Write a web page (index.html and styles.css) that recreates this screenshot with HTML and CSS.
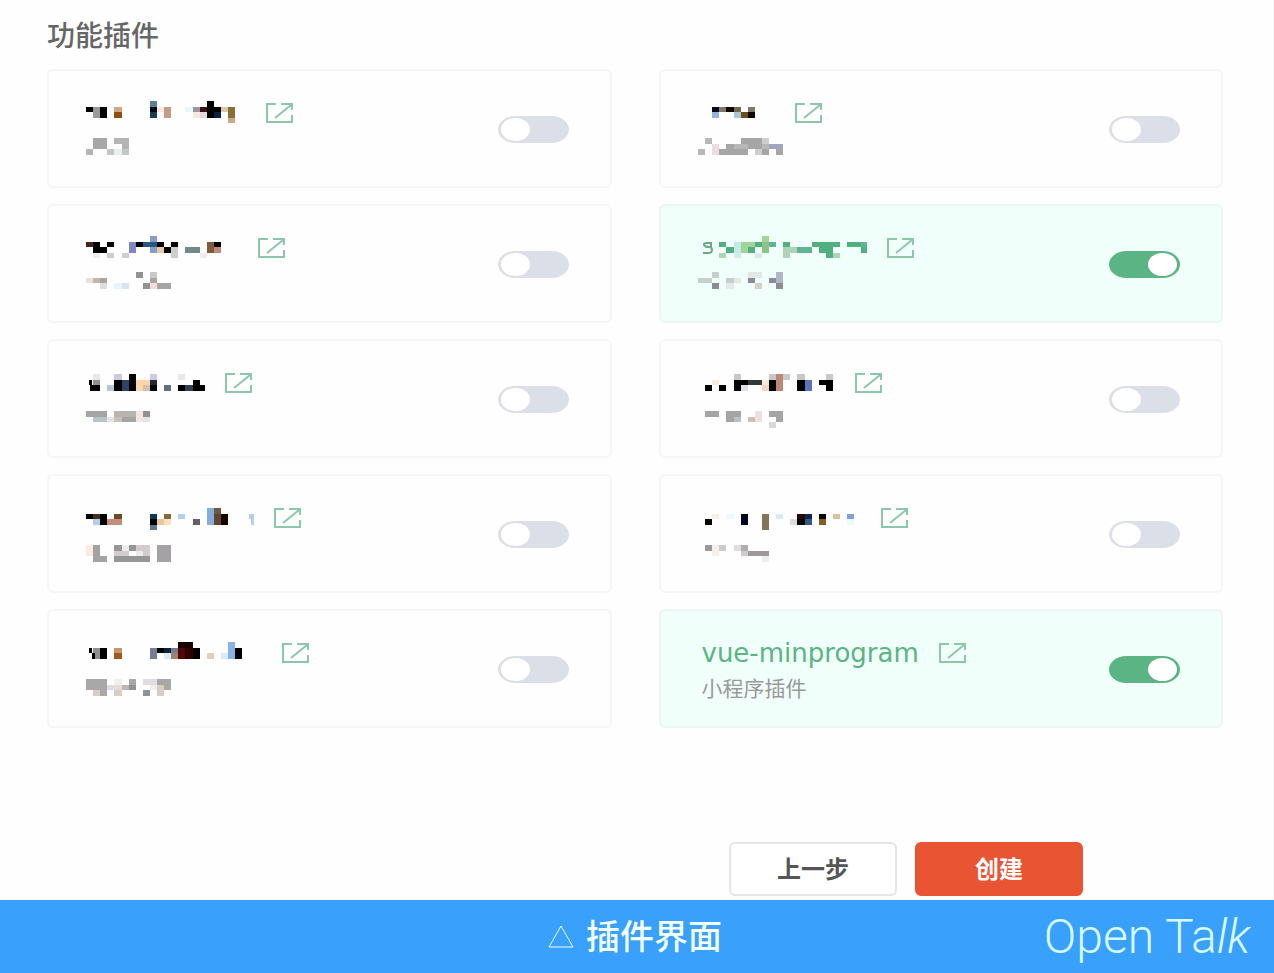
FILE: index.html
```html
<!DOCTYPE html>
<html lang="zh-CN">
<head>
    <meta charset="UTF-8">
    <meta name="viewport" content="width=device-width, initial-scale=1.0">
    <title>功能插件</title>
    <link rel="stylesheet" href="styles.css">
</head>
<body>
    <!-- Shared external link icon -->
    <svg class="sprite" aria-hidden="true">
        <symbol id="icon-link" viewBox="0 0 27 21">
            <path d="M10 1H1v18h25v-7M9 15L25 2M15 1h11v6" />
        </symbol>
    </svg>

    <main class="page">
        <h1 class="page-title">功能插件</h1>

        <div class="plugin-grid">
            <div class="plugin-card">
                <div class="plugin-info">
                    <div class="plugin-head">
                        <svg class="mosaic" width="160" height="28"><g transform="translate(0 5) scale(7.1 5.4)">
                            <path stroke="#000" d="M0 1h1M2 1h1M2 2h1M17 0h1M17 1h2M17 2h1" />
                            <path stroke="#9a98a0" d="M1 1h1M1 2h1M15 1h1" />
                            <path stroke="#d0a884" d="M4 1h1M20 3h1" />
                            <path stroke="#8a5010" d="M4 2h1" />
                            <path stroke="#5b8292" d="M9 0h1" />
                            <path stroke="#000818" d="M9 1h1" />
                            <path stroke="#1a3a50" d="M9 2h1" />
                            <path stroke="#f8e8e0" d="M10 1h1M15 2h1" />
                            <path stroke="#c89a88" d="M11 1h1M11 2h1" />
                            <path stroke="#e8f8f8" d="M14 1h1" />
                            <path stroke="#401018" d="M16 1h1" />
                            <path stroke="#e0d8d8" d="M16 2h1" />
                            <path stroke="#0a2040" d="M18 2h1" />
                            <path stroke="#d8c8b0" d="M19 1h1" />
                            <path stroke="#8a7038" d="M20 1h1M20 2h1" />
                        </g></svg>
                        <a class="plugin-link" href="#" aria-label="查看插件"><svg><use href="#icon-link" /></svg></a>
                    </div>
                    <svg class="mosaic" width="92" height="24"><g transform="translate(0 6) scale(7.1 5.4)">
                        <path stroke="#a8a8a8" d="M1 0h2M1 1h2" />
                        <path stroke="#b4b4b4" d="M4 0h2M5 1h1M0 2h1" />
                        <path stroke="#c6c6c6" d="M3 2h1M5 2h1" />
                        <path stroke="#e8f0f0" d="M4 2h1" />
                    </g></svg>
                </div>
                <input class="switch" type="checkbox" aria-label="启用插件">
            </div>

            <div class="plugin-card">
                <div class="plugin-info">
                    <div class="plugin-head">
                        <svg class="mosaic" width="77" height="28"><g transform="translate(0 5) scale(7.1 5.4)">
                            <path stroke="#000820" d="M2 1h1" />
                            <path stroke="#807868" d="M3 1h1M7 1h1" />
                            <path stroke="#100800" d="M4 1h1M7 2h1" />
                            <path stroke="#706850" d="M5 1h1" />
                            <path stroke="#98b0e0" d="M2 2h1" />
                            <path stroke="#a8c8d8" d="M5 2h1" />
                            <path stroke="#685018" d="M6 2h1" />
                        </g></svg>
                        <a class="plugin-link" href="#" aria-label="查看插件"><svg><use href="#icon-link" /></svg></a>
                    </div>
                    <svg class="mosaic" width="92" height="24"><g transform="translate(0 6) scale(7.1 5.4)">
                        <path stroke="#b8b8b8" d="M1 0h1M5 1h2M9 1h1M0 2h1" />
                        <path stroke="#a6a6a6" d="M6 0h3M4 1h1M7 1h2M3 2h4M9 2h1M11 2h1" />
                        <path stroke="#cecece" d="M9 0h1M8 2h1" />
                        <path stroke="#eedcde" d="M2 1h1M2 2h1" />
                        <path stroke="#a4a4c0" d="M10 1h2" />
                    </g></svg>
                </div>
                <input class="switch" type="checkbox" aria-label="启用插件">
            </div>

            <div class="plugin-card">
                <div class="plugin-info">
                    <div class="plugin-head">
                        <svg class="mosaic" width="152" height="28"><g transform="translate(0 5) scale(7.1 5.4)">
                            <path stroke="#8a9cc8" d="M9 0h1M9 2h1" />
                            <path stroke="#402818" d="M0 1h1" />
                            <path stroke="#000" d="M1 1h1M3 1h1M7 1h1M10 1h1M12 1h1M18 1h1M1 2h2M11 2h1" />
                            <path stroke="#7d88c4" d="M6 1h1M6 2h1" />
                            <path stroke="#285880" d="M8 1h2" />
                            <path stroke="#805c38" d="M17 1h1M17 2h1" />
                            <path stroke="#e8c8a8" d="M10 2h1" />
                            <path stroke="#ccd0cc" d="M12 2h1M3 3h1M5 3h1M12 3h1" />
                            <path stroke="#708888" d="M14 2h2" />
                            <path stroke="#c08878" d="M18 2h1" />
                            <path stroke="#eee" d="M1 3h1M16 3h1" />
                        </g></svg>
                        <a class="plugin-link" href="#" aria-label="查看插件"><svg><use href="#icon-link" /></svg></a>
                    </div>
                    <svg class="mosaic" width="92" height="24"><g transform="translate(0 5) scale(7.1 5.4)">
                        <path stroke="#929292" d="M7 0h1M8 2h1" />
                        <path stroke="#c8c8c8" d="M9 0h1" />
                        <path stroke="#eee0d8" d="M0 1h1M9 2h1" />
                        <path stroke="#c0b8b0" d="M1 1h1" />
                        <path stroke="#a8a4a4" d="M2 1h1M9 1h1M10 2h2" />
                        <path stroke="#ddd" d="M2 2h1" />
                        <path stroke="#e8f4ff" d="M4 2h1" />
                        <path stroke="#d8e4f0" d="M5 2h1" />
                    </g></svg>
                </div>
                <input class="switch" type="checkbox" aria-label="启用插件">
            </div>

            <div class="plugin-card active">
                <div class="plugin-info">
                    <div class="plugin-head">
                        <svg class="mosaic" width="169" height="28"><g transform="translate(0 5) scale(7.1 5.4)">
                            <path stroke="#50b080" d="M3 1h1M8 1h1M12 1h1M16 1h4M21 1h2M4 2h1M7 2h1M17 2h2M23 2h1M18 3h1" />
                            <path stroke="#a0d498" d="M9 0h1M6 1h2M6 2h1" />
                            <path stroke="#c4eaec" d="M5 1h1M5 2h1" />
                            <path stroke="#8cc488" d="M9 1h1M9 2h1" />
                            <path stroke="#62b294" d="M10 1h1M23 1h1M14 2h2" />
                            <path stroke="#aed4b8" d="M12 2h2M3 3h1M12 3h1M19 3h1" />
                            <path stroke="#d6eae8" d="M5 3h1M8 3h1" />
                        </g><path class="mosaic-edge" d="M14 9H9q-4 0-3 2t5 2q3 0 3 3t-4 3H5M13 8v5" /></svg>
                        <a class="plugin-link" href="#" aria-label="查看插件"><svg><use href="#icon-link" /></svg></a>
                    </div>
                    <svg class="mosaic" width="92" height="24"><g transform="translate(0 5) scale(7.1 5.4)">
                        <path stroke="#c6cece" d="M2 0h1M0 1h2M4 1h1" />
                        <path stroke="#e2e8e6" d="M7 0h2M5 1h1M4 2h1" />
                        <path stroke="#b2b6c4" d="M11 0h1M11 1h1" />
                        <path stroke="#8c8c98" d="M7 1h1M10 1h1M2 2h1M11 2h1" />
                        <path stroke="#d0d4c4" d="M8 2h1" />
                    </g></svg>
                </div>
                <input class="switch" type="checkbox" aria-label="启用插件" checked>
            </div>

            <div class="plugin-card">
                <div class="plugin-info">
                    <div class="plugin-head">
                        <svg class="mosaic" width="119" height="28"><g transform="translate(0 8) scale(7.1 5.4)">
                            <path stroke="#e8e8e8" d="M1 0h1M13 0h1" />
                            <path stroke="#ccd" d="M4 0h1M9 0h1" />
                            <path stroke="#000" d="M6 0h1M.4 1h.4M4 1h1M6 1h1M15 1h1M.6 2h1.4M4 2h1M6 2h1M9 2h1M13 2h1M15 2h2" />
                            <path stroke="#909090" d="M1 1h1" />
                            <path stroke="#2c4468" d="M5 1h1M5 2h1" />
                            <path stroke="#fad6ae" d="M7 1h2M7 2h1" />
                            <path stroke="#202838" d="M9 1h1" />
                            <path stroke="#b0c8d8" d="M3 2h1" />
                            <path stroke="#d8c0a8" d="M8 2h1" />
                            <path stroke="#607080" d="M11 2h1" />
                            <path stroke="#304050" d="M14 2h1" />
                        </g></svg>
                        <a class="plugin-link" href="#" aria-label="查看插件"><svg><use href="#icon-link" /></svg></a>
                    </div>
                    <svg class="mosaic" width="92" height="24"><g transform="translate(0 9) scale(7.1 5.4)">
                        <path stroke="#a4a4a4" d="M0 0h3M5 1h2" />
                        <path stroke="#b8b4b0" d="M4 0h3" />
                        <path stroke="#f0e8e0" d="M7 0h1M7 1h1" />
                        <path stroke="#989090" d="M8 0h1" />
                        <path stroke="#b8c4c8" d="M1 1h2" />
                        <path stroke="#e4e4e4" d="M3 1h1M8 1h1" />
                        <path stroke="#c8c0b8" d="M4 1h1" />
                    </g></svg>
                </div>
                <input class="switch" type="checkbox" aria-label="启用插件">
            </div>

            <div class="plugin-card">
                <div class="plugin-info">
                    <div class="plugin-head">
                        <svg class="mosaic" width="137" height="28"><g transform="translate(0 8) scale(7.1 5.4)">
                            <path stroke="#c8c8c8" d="M5 0h1M10 0h1M12 0h1M14 0h1M18 0h1" />
                            <path stroke="#be8676" d="M11 0h1M11 1h1M11 2h1" />
                            <path stroke="#f8eadc" d="M2 1h1M9 1h1" />
                            <path stroke="#000" d="M5 1h2M10 1h1M14 1h1M17 1h2M1 2h1M3 2h1M5 2h1M10 2h1M14 2h1M18 2h1" />
                            <path stroke="#303838" d="M7 1h2" />
                            <path stroke="#5a74b8" d="M15 1h1M15 2h1" />
                            <path stroke="#e0e0e8" d="M6 2h1" />
                            <path stroke="#f0d8c8" d="M9 2h1" />
                        </g></svg>
                        <a class="plugin-link" href="#" aria-label="查看插件"><svg><use href="#icon-link" /></svg></a>
                    </div>
                    <svg class="mosaic" width="92" height="24"><g transform="translate(0 9) scale(7.1 5.4)">
                        <path stroke="#a4a4a4" d="M1 0h2M4 0h2M10 0h2M4 1h1M11 1h1" />
                        <path stroke="#eee0da" d="M8 0h1M8 1h1" />
                        <path stroke="#b8c0c4" d="M5 1h1" />
                        <path stroke="#ccc0b8" d="M7 1h1" />
                        <path stroke="#d8d8d8" d="M10 2h1" />
                    </g></svg>
                </div>
                <input class="switch" type="checkbox" aria-label="启用插件">
            </div>

            <div class="plugin-card">
                <div class="plugin-info">
                    <div class="plugin-head">
                        <svg class="mosaic" width="168" height="28"><g transform="translate(0 7) scale(7.1 5.4)">
                            <path stroke="#84acde" d="M17 0h1M17 1h1M17 2h1" />
                            <path stroke="#705840" d="M18 0h1" />
                            <path stroke="#000" d="M0 1h1M2 1h1M2 2h1M9 2h1" />
                            <path stroke="#403018" d="M1 1h1" />
                            <path stroke="#704820" d="M4 1h1" />
                            <path stroke="#103858" d="M9 1h1" />
                            <path stroke="#886838" d="M11 1h1" />
                            <path stroke="#b0d0ec" d="M13 1h1M23 1h1M1 2h1M23.2 2h.6" />
                            <path stroke="#604434" d="M18 1h1M18 2h1" />
                            <path stroke="#180000" d="M19 1h1M19 2h1" />
                            <path stroke="#c48c7c" d="M3 2h2" />
                            <path stroke="#e8c8a0" d="M10 2h1" />
                            <path stroke="#fce0c0" d="M11 2h1" />
                            <path stroke="#606060" d="M15 2h1" />
                            <path stroke="#607888" d="M9 3h1" />
                        </g></svg>
                        <a class="plugin-link" href="#" aria-label="查看插件"><svg><use href="#icon-link" /></svg></a>
                    </div>
                    <svg class="mosaic" width="92" height="24"><g transform="translate(0 8) scale(7.1 5.4)">
                        <path stroke="#fcece0" d="M0 0h1M0 1h1" />
                        <path stroke="#a4a2a4" d="M1 0h1M10 0h2M1 1h1M10 1h2M1 2h2M10 2h2" />
                        <path stroke="#969696" d="M4 0h1M6 0h1M4 2h5" />
                        <path stroke="#d0ccd0" d="M7 0h2M4 1h2M8 1h1" />
                        <path stroke="#ececea" d="M5 0h1M7 1h1" />
                    </g></svg>
                </div>
                <input class="switch" type="checkbox" aria-label="启用插件">
            </div>

            <div class="plugin-card">
                <div class="plugin-info">
                    <div class="plugin-head">
                        <svg class="mosaic" width="163" height="28"><g transform="translate(0 7) scale(7.1 5.4)">
                            <path stroke="#f8f0e4" d="M2 1h1" />
                            <path stroke="#e8fcff" d="M4 1h1M21 2h1" />
                            <path stroke="#000020" d="M6 1h1M6 2h1" />
                            <path stroke="#827659" d="M9 1h1M9 2h1M9 3h1" />
                            <path stroke="#d8ecf4" d="M11 1h1" />
                            <path stroke="#280808" d="M14 1h1" />
                            <path stroke="#102850" d="M15 1h1" />
                            <path stroke="#080400" d="M17 1h1M1 2h1M14 2h1" />
                            <path stroke="#d8c0a0" d="M19 1h1" />
                            <path stroke="#80a0d0" d="M21 1h1" />
                            <path stroke="#ddd" d="M13 2h1" />
                            <path stroke="#305888" d="M15 2h1" />
                            <path stroke="#806020" d="M17 2h1" />
                        </g></svg>
                        <a class="plugin-link" href="#" aria-label="查看插件"><svg><use href="#icon-link" /></svg></a>
                    </div>
                    <svg class="mosaic" width="92" height="24"><g transform="translate(0 8) scale(7.1 5.4)">
                        <path stroke="#9c989c" d="M1 0h1M7 1h3" />
                        <path stroke="#f8f0e4" d="M2 0h1M2 1h1" />
                        <path stroke="#ccc" d="M3 0h1M6 1h1" />
                        <path stroke="#ddd" d="M5 0h1" />
                        <path stroke="#b0acb0" d="M6 0h1" />
                        <path stroke="#eee" d="M9 2h1" />
                    </g></svg>
                </div>
                <input class="switch" type="checkbox" aria-label="启用插件">
            </div>

            <div class="plugin-card">
                <div class="plugin-info">
                    <div class="plugin-head">
                        <svg class="mosaic" width="176" height="28"><g transform="translate(0 6) scale(7.1 5.4)">
                            <path stroke="#180000" d="M13 0h2" />
                            <path stroke="#86b6e8" d="M20 0h1M20 1h1M20 2h1" />
                            <path stroke="#000" d="M.4 1h.5M2 1h1M10 1h1M15 1h1M21 1h1M.8 2h.4M2 2h1M15 2h1M21 2h1" />
                            <path stroke="#909090" d="M1 1h1M1.2 2h.8" />
                            <path stroke="#c8986c" d="M4 1h1" />
                            <path stroke="#747e90" d="M9 1h1M9 2h1M12 1h1" />
                            <path stroke="#102040" d="M11 1h1" />
                            <path stroke="#500800" d="M13 1h1M13 2h1" />
                            <path stroke="#300000" d="M14 1h1M14 2h1" />
                            <path stroke="#a05820" d="M4 2h1" />
                            <path stroke="#d8ecfa" d="M11 2h1M19 2h1" />
                            <path stroke="#a08070" d="M12 2h1" />
                            <path stroke="#e0d0b8" d="M17 2h1" />
                        </g></svg>
                        <a class="plugin-link" href="#" aria-label="查看插件"><svg><use href="#icon-link" /></svg></a>
                    </div>
                    <svg class="mosaic" width="92" height="24"><g transform="translate(0 7) scale(7.1 5.4)">
                        <path stroke="#a8a8a8" d="M0 0h3M6 0h1M10 0h2M0 1h3M11 1h1M2 2h1" />
                        <path stroke="#f2eeec" d="M4 0h1M9 1h1" />
                        <path stroke="#e0dce0" d="M8 0h2M3 1h2" />
                        <path stroke="#c0b8b0" d="M5 1h1" />
                        <path stroke="#929292" d="M6 1h1M8 2h1" />
                        <path stroke="#d6cec4" d="M10 1h1M1 2h1M4 2h1M10 2h1" />
                    </g></svg>
                </div>
                <input class="switch" type="checkbox" aria-label="启用插件">
            </div>

            <div class="plugin-card active">
                <div class="plugin-info">
                    <div class="plugin-head">
                        <label class="plugin-name" for="minprogram">vue-minprogram</label>
                        <a class="plugin-link" href="#" aria-label="查看插件"><svg><use href="#icon-link" /></svg></a>
                    </div>
                    <div class="plugin-desc">小程序插件</div>
                </div>
                <input class="switch" id="minprogram" type="checkbox" checked>
            </div>
        </div>

        <div class="actions">
            <button class="btn" type="button">上一步</button>
            <button class="btn btn-primary" type="button">创建</button>
        </div>
    </main>

    <footer class="caption-bar">
        <div class="caption">
            <svg class="caption-mark" viewBox="0 0 26 24" aria-hidden="true"><path d="M13 1L25 22H1z" /></svg>
            <span>插件界面</span>
        </div>
        <div class="brand">Open Ta<em>lk</em></div>
    </footer>
</body>
</html>
```

FILE: styles.css
```css
* {
    box-sizing: border-box;
}

body {
    margin: 0;
    min-height: 100vh;
    display: flex;
    flex-direction: column;
    background: #fefefe;
    font-family: "Liberation Sans", "Noto Sans CJK SC", sans-serif;
}

.sprite {
    display: none;
}

.page {
    flex: 1;
    padding: 17px 50px 4px 47px;
    border-right: 1px solid #f3f3f5;
}

.page-title {
    margin: 0 0 12px;
    font-size: 28px;
    line-height: 40px;
    font-weight: 500;
    color: #666;
}

/* Plugin cards */
.plugin-grid {
    display: grid;
    grid-template-columns: repeat(2, 1fr);
    column-gap: 47px;
    row-gap: 16px;
}

.plugin-card {
    display: flex;
    align-items: center;
    justify-content: space-between;
    padding: 28px 41px 27px;
    border: 2px solid #f6f6f6;
    border-radius: 6px;
    background: #fefefe;
}

.plugin-card.active {
    background: #f0fffa;
    border-color: #ebf6f2;
}

.plugin-info {
    display: flex;
    flex-direction: column;
    gap: 8px;
}

.plugin-head {
    display: flex;
    align-items: center;
    gap: 20px;
    height: 28px;
}

.plugin-name {
    font-family: "DejaVu Sans", sans-serif;
    font-size: 26px;
    line-height: 28px;
    color: #5bb483;
}

.plugin-desc {
    padding-top: 4px;
    font-size: 21px;
    line-height: 20px;
    color: #999;
}

.plugin-link,
.plugin-link svg {
    display: block;
    width: 27px;
    height: 21px;
}

.plugin-link {
    fill: none;
    stroke: #8bc8ab;
    stroke-width: 2;
}

/* Blocked-out names */
.mosaic {
    display: block;
    margin-left: -4px;
    fill: none;
    stroke-width: 1;
    shape-rendering: crispEdges;
}

.mosaic-edge {
    stroke: #6aa98a;
    stroke-width: 2;
    shape-rendering: auto;
}

/* Toggle */
.switch {
    appearance: none;
    flex: none;
    width: 71px;
    height: 27px;
    margin: 0;
    padding: 2px 3px;
    display: flex;
    border-radius: 18px / 14px;
    background: #dcdfe7;
    cursor: pointer;
}

.switch::before {
    content: '';
    width: 29px;
    height: 23px;
    border-radius: 50%;
    background: #fff;
}

.switch:checked {
    justify-content: flex-end;
    background: #5bb483;
}

/* Bottom buttons */
.actions {
    display: flex;
    justify-content: flex-end;
    gap: 18px;
    margin-top: 114px;
    padding-right: 140px;
}

.btn {
    width: 168px;
    height: 54px;
    padding: 0 0 4px;
    border: 2px solid #e6e6e6;
    border-radius: 6px;
    background: #fff;
    color: #555;
    font-family: inherit;
    font-size: 24px;
    font-weight: bold;
    cursor: pointer;
}

.btn-primary {
    border-color: #e95533;
    background: #e95533;
    color: #fff;
}

/* Caption bar */
.caption-bar {
    display: grid;
    grid-template-columns: 1fr auto 1fr;
    align-items: center;
    height: 73px;
    padding: 0 24px 0 20px;
    background: #39a0fc;
    color: #f2feff;
}

.caption {
    grid-column: 2;
    display: flex;
    align-items: center;
    gap: 12px;
    font-size: 34px;
    line-height: 48px;
    font-weight: 500;
}

.caption-mark {
    width: 26px;
    height: 24px;
    fill: none;
    stroke: #f2feff;
    stroke-width: 1;
}

.brand {
    justify-self: end;
    font-family: Roboto, sans-serif;
    font-size: 48px;
    line-height: 56px;
    font-weight: 300;
    color: #d6fbff;
}
```
